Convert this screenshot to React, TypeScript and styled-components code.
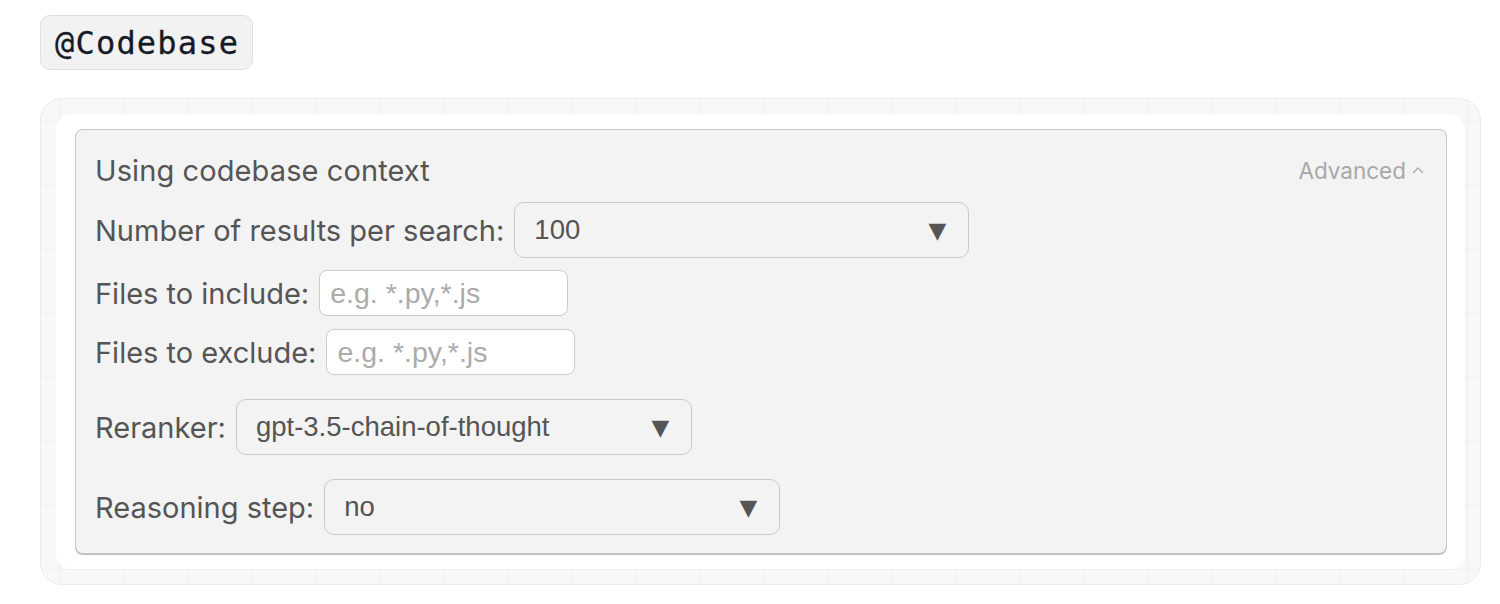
import React from "react";
import styled, { createGlobalStyle } from "styled-components";

const Global = createGlobalStyle`
  html, body { margin: 0; padding: 0; background: #ffffff; }
  body { font-family: "Inter", "Liberation Sans", sans-serif; }
  * { box-sizing: border-box; }
`;

const Page = styled.div`
  padding: 15px 19px 0 40px;
  display: flex;
  flex-direction: column;
  align-items: flex-start;
  gap: 28px;
`;

const Pill = styled.div`
  height: 55px;
  padding: 0 13px 0 14px;
  display: flex;
  align-items: center;
  background: #f2f2f2;
  border: 1.5px solid #e0e0e0;
  border-radius: 10px;
  font-family: "DejaVu Sans Mono", "Liberation Mono", monospace;
  font-size: 32px;
  letter-spacing: 1.2px;
  color: #161a27;
  -webkit-text-stroke: 0.3px #161a27;
`;

const Canvas = styled.div`
  align-self: stretch;
  height: 487px;
  padding: 15px 15px;
  border: 1.5px solid #ebebeb;
  border-radius: 22px;
  background-color: #f8f8f8;
  background-image:
    linear-gradient(to right, #eeeeee 1px, transparent 1px),
    linear-gradient(to bottom, #f0f0f0 1px, transparent 1px);
  background-size: 64px 64px;
  background-position: 18px 22px;
`;

const Frame = styled.div`
  height: 100%;
  padding: 15px 18px 15px 19px;
  background: #ffffff;
  border-radius: 16px;
`;

const Panel = styled.div`
  height: 100%;
  padding: 21px 22px 0 19px;
  background: #f3f3f3;
  border: 1.5px solid #c6c6c6;
  border-radius: 8px;
  box-shadow: 0 1px 0 #bdbdbd;
  display: flex;
  flex-direction: column;
  color: #555555;
`;

const Header = styled.div`
  display: flex;
  align-items: center;
  justify-content: space-between;
  height: 38px;
  margin-bottom: 13px;
`;

const Title = styled.div`
  font-size: 29px;
  color: #555555;
  letter-spacing: 0.1px;
`;

const Advanced = styled.div`
  display: flex;
  align-items: center;
  gap: 6px;
  font-size: 22.5px;
  color: #a8a8a8;
`;

const Row = styled.div<{ $mt?: number }>`
  display: flex;
  align-items: center;
  gap: 10px;
  margin-top: ${(p) => p.$mt ?? 0}px;
`;

const Label = styled.span`
  font-size: 29px;
  color: #555555;
  white-space: nowrap;
`;

const Select = styled.div<{ $w: number }>`
  width: ${(p) => p.$w}px;
  height: 56px;
  padding: 0 22px 0 19px;
  display: flex;
  align-items: center;
  justify-content: space-between;
  background: #f3f3f3;
  border: 1.5px solid #c9c9c9;
  border-radius: 10px;
  font-family: "Liberation Sans", Arial, sans-serif;
  font-size: 27.5px;
  color: #555555;
`;

const Arrow = styled.span`
  font-family: "DejaVu Sans", sans-serif;
  font-size: 22px;
  color: #555555;
  transform: scaleX(1.05);
`;

const Input = styled.input`
  width: 249px;
  height: 46px;
  padding: 0 10px;
  background: #ffffff;
  border: 1.5px solid #cccccc;
  border-radius: 8px;
  font-family: "Liberation Sans", Arial, sans-serif;
  font-size: 28.5px;
  color: #555555;
  outline: none;
  &::placeholder { color: #ababab; }
`;

const Chevron = () => (
  <svg width="12" height="8" viewBox="0 0 12 8" fill="none">
    <path d="M1.5 6.5 L6 2 L10.5 6.5" stroke="#aaaaaa" strokeWidth="1.4" strokeLinecap="round" strokeLinejoin="round" />
  </svg>
);

export default function App() {
  return (
    <>
      <Global />
      <Page>
        <Pill>@Codebase</Pill>
        <Canvas>
          <Frame>
            <Panel>
              <Header>
                <Title>Using codebase context</Title>
                <Advanced>
                  Advanced <Chevron />
                </Advanced>
              </Header>
              <Row>
                <Label>Number of results per search:</Label>
                <Select $w={455}>
                  <span>100</span>
                  <Arrow>▼</Arrow>
                </Select>
              </Row>
              <Row $mt={12}>
                <Label>Files to include:</Label>
                <Input placeholder="e.g. *.py,*.js" />
              </Row>
              <Row $mt={13}>
                <Label>Files to exclude:</Label>
                <Input placeholder="e.g. *.py,*.js" />
              </Row>
              <Row $mt={24}>
                <Label>Reranker:</Label>
                <Select $w={456}>
                  <span>gpt-3.5-chain-of-thought</span>
                  <Arrow>▼</Arrow>
                </Select>
              </Row>
              <Row $mt={24}>
                <Label>Reasoning step:</Label>
                <Select $w={456}>
                  <span>no</span>
                  <Arrow>▼</Arrow>
                </Select>
              </Row>
            </Panel>
          </Frame>
        </Canvas>
      </Page>
    </>
  );
}
